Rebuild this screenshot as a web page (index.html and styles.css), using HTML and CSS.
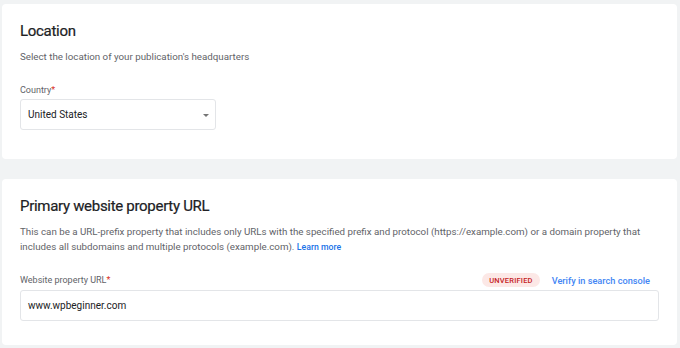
FILE: index.html
```html
<!DOCTYPE html>
<html lang="en">
<head>
    <meta charset="UTF-8">
    <meta name="viewport" content="width=device-width, initial-scale=1.0">
    <title>Publication settings</title>
    <link rel="stylesheet" href="styles.css">
</head>
<body>
    <div class="page">
        <section class="card card-location">
            <h2>Location</h2>
            <p class="desc">Select the location of your publication's headquarters</p>
            <label class="field-label" for="country">Country<span class="req">*</span></label>
            <div class="select-box" id="country">
                <span>United States</span>
                <span class="caret"></span>
            </div>
        </section>

        <section class="card card-url">
            <h2>Primary website property URL</h2>
            <p class="desc">This can be a URL-prefix property that includes only URLs with the specified prefix and protocol (https://example.com) or a domain property that includes all subdomains and multiple protocols (example.com). <a href="#" class="learn">Learn more</a></p>
            <div class="label-row">
                <label class="field-label" for="site-url">Website property URL<span class="req">*</span></label>
                <div class="status">
                    <span class="badge">UNVERIFIED</span>
                    <a href="#" class="verify">Verify in search console</a>
                </div>
            </div>
            <div class="text-box" id="site-url">www.wpbeginner.com</div>
        </section>
    </div>
</body>
</html>
```

FILE: styles.css
```css
:root {
    --bg: #f1f3f4;
    --text: #3c4043;
    --muted: #5f6368;
    --border: #e3e5e8;
    --blue: #1a73e8;
    --red: #d93025;
}

body {
    margin: 0;
    background-color: var(--bg);
    font-family: Roboto, 'Liberation Sans', sans-serif;
    color: var(--text);
}

.page {
    padding: 4px 3px 0 2px;
    display: flex;
    flex-direction: column;
    gap: 20px;
}

.card {
    background-color: white;
    border-radius: 4px;
    padding: 1px 18px 0 18px;
}

.card-location {
    height: 154px;
}

.card-url {
    height: 165px;
}

h2 {
    font-weight: 400;
    font-size: 15px;
    letter-spacing: -0.3px;
    color: #202124;
    -webkit-text-stroke: 0.2px #202124;
    margin: 16px 0 0 0;
    line-height: 20px;
}

.desc {
    font-size: 9.75px;
    color: var(--muted);
    margin: 8px 0 0 0;
    line-height: 15px;
}

.field-label {
    display: block;
    font-size: 9px;
    color: var(--muted);
    line-height: 12px;
}

.card-location .field-label {
    margin-top: 20px;
}

.req {
    color: var(--red);
}

.select-box {
    margin-top: 3px;
    width: 196px;
    height: 31px;
    box-sizing: border-box;
    border: 1px solid var(--border);
    border-radius: 3px;
    display: flex;
    align-items: center;
    justify-content: space-between;
    padding: 0 6px 0 7px;
    font-size: 10px;
    color: #202124;
}

.caret {
    width: 0;
    height: 0;
    border-left: 3.5px solid transparent;
    border-right: 3.5px solid transparent;
    border-top: 3.5px solid #757575;
    margin-top: 1px;
}

.learn {
    color: var(--blue);
    font-size: 8.7px;
    font-weight: 500;
    text-decoration: none;
}

.label-row {
    margin-top: 18px;
    display: flex;
    justify-content: space-between;
    align-items: center;
    padding-right: 9px;
}

.status {
    display: flex;
    align-items: center;
    gap: 12px;
}

.badge {
    background-color: #fce8e6;
    color: #c5221f;
    font-size: 7.5px;
    line-height: 9px;
    font-weight: 500;
    letter-spacing: 0.2px;
    padding: 3px 7px 2px;
    border-radius: 8px;
}

.verify {
    color: #4285f4;
    font-size: 9.2px;
    font-weight: 500;
    text-decoration: none;
}

.text-box {
    margin-top: 3px;
    height: 31px;
    box-sizing: border-box;
    border: 1px solid var(--border);
    border-radius: 3px;
    display: flex;
    align-items: center;
    padding: 0 7px;
    font-size: 10px;
    color: #202124;
}
```
